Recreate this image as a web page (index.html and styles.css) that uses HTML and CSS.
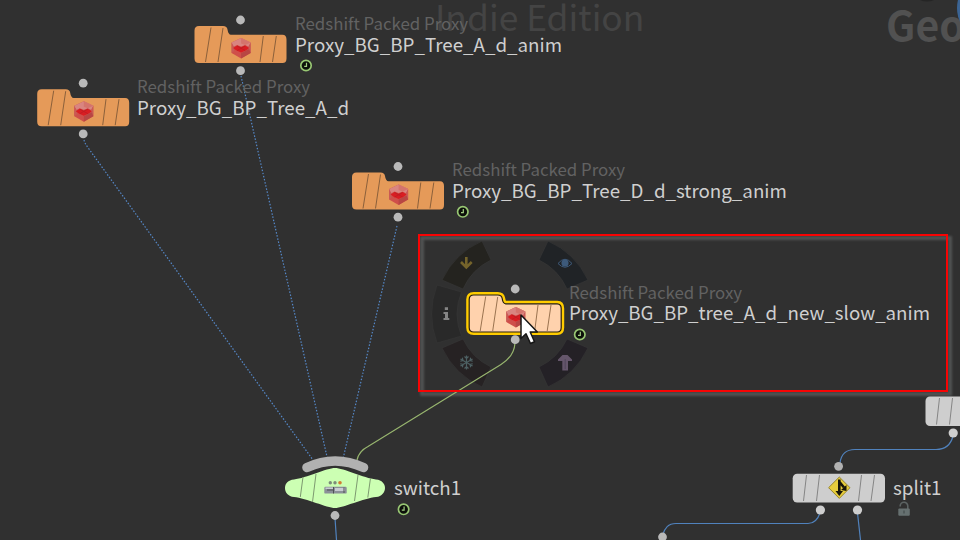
FILE: index.html
```
<!DOCTYPE html>
<html lang="en">
<head>
<meta charset="utf-8">
<title>Network editor</title>
<link rel="stylesheet" href="styles.css">
</head>
<body>
<main class="canvas">
  <svg class="defs" width="0" height="0">
    <defs>
      <path id="file-body" d="M-41.5 6H-17.5Q-13.5 6 -13 9.500Q-12.300 14.600 -9.500 14.800H42Q46 15 46 19.500V38.500Q46 43 42 43H-41.500Q-46 43 -46 38.500V10.500Q-46 6 -41.500 6Z"/>
      <path id="file-lines" d="M-29.500 7.500L-35 42M-17.500 8L-22.500 42M22.800 16L19.500 42M35.800 16L32 42"/>
      <g id="cube">
        <path fill="#cf4f4a" d="M0 -10L9.500 -5.500V5L0 10.500L-9.500 5V-5.500Z"/>
        <path fill="#d98580" d="M0 -10L9.500 -5.500L8 -1L4 -3L0 -1.500L-4 -3L-8 -1L-9.500 -5.500Z"/>
        <path fill="#d4746c" d="M0 -10L9.500 -5.500L4 -3L0 -4.500Z"/>
        <path fill="#c95a55" d="M-9.500 -5.500L-7 -1V3L-9.500 5ZM9.500 -5.500L7 -1V3L9.500 5Z"/>
        <path fill="#b84643" d="M0 5L8 1L9.500 5L0 10.500Z"/>
        <path fill="#d91d22" d="M-8 0L-4 -2.500L0 -.8L4 -2.500L8 0L5 2.200L0 4.500L-5 2.200Z"/>
        <path fill="none" stroke="#b91c22" stroke-width=".7" d="M-4 -2L4 2.500M4 -2L-4 2.500"/>
      </g>
      <g id="clock">
        <circle r="5.200" fill="#0c100a" stroke="#98c773" stroke-width="1.700"/>
        <path fill="none" stroke="#a3cf82" stroke-width="1.200" d="M.5 -2.800V.8H-1.800"/>
      </g>
      <g id="proxy">
        <use href="#file-body" fill="#e59a59"/>
        <use href="#file-lines" stroke="#8b603b" stroke-width="1"/>
        <circle r="4.400" fill="#b9b9b9"/>
        <circle cy="50.700" r="4.400" fill="#b9b9b9"/>
        <use href="#cube" x=".6" y="28"/>
      </g>
    </defs>
  </svg>

  <div class="mark edition">Indie Edition</div>
  <div class="mark context">Geo</div>

  <svg class="layer" viewBox="0 0 960 540">
    <ellipse cx="971" cy="8" rx="14" ry="22" fill="#3b6494"/>
    <path d="M920 0Q927 3 934 0Z" fill="#252525"/>
    <g class="radial">
      <path fill="#24231f" d="M442 280A80.500 80.500 0 0 1 482 241L491 260A58.500 58.500 0 0 0 463 289Z"/>
      <path fill="#202326" d="M588 280A80.500 80.500 0 0 0 548 241L539 260A58.500 58.500 0 0 1 567 289Z"/>
      <path fill="#292929" d="M437 285A83 83 0 0 0 437 343L461.500 336A58 58 0 0 1 461.500 292Z"/>
      <path fill="#262223" d="M442 348A80.500 80.500 0 0 0 482 387L491 367A58.500 58.500 0 0 1 463 339Z"/>
      <path fill="#242126" d="M588 348A80.500 80.500 0 0 1 548 387L539 367A58.500 58.500 0 0 0 567 339Z"/>
    </g>
    <path fill="none" stroke="#75642b" stroke-width="2.600" d="M466.300 257V267M461 262L466.300 267.500L471.700 262"/>
    <path fill="none" stroke="#3d5a7b" stroke-width="1" d="M558 263.500Q565 255 572 263.500Q565 271 558 263.500Z"/>
    <circle cx="565" cy="263" r="3.600" fill="#3d5a7b"/>
    <path fill="#858585" d="M444.800 307.300H448V310H444.800ZM443.500 312H448V318H449.300V320H443.500V318H445V314H443.500Z"/>
    <g fill="none" stroke="#4d6063" stroke-width="1.200" transform="translate(466.500 362.500)">
      <path id="flake" d="M0 -7V7M-2 -6L0 -4L2 -6M-2 6L0 4L2 6"/>
      <use href="#flake" transform="rotate(60)"/>
      <use href="#flake" transform="rotate(120)"/>
    </g>
    <path fill="#65566b" d="M558 359.500L562.500 355H567.500L572 359.500V361H568V370.500H562.300V361H558Z"/>
    <path stroke="#51465a" d="M565.200 359V369"/>
  </svg>

  <div class="frame-shadow"></div>

  <svg class="layer" viewBox="0 0 960 540">
    <g fill="none" stroke-width="1.200">
      <g stroke="#5588c8" stroke-dasharray="1.500 1.700">
        <path d="M84 140Q85 144 89 149L313 460"/>
        <path d="M241 76L327.500 459"/>
        <path d="M397 226L343 459"/>
      </g>
      <path stroke="#98b66f" d="M515 343C514.500 351 510 359 501 364.500L368 446.500Q359 451 357 460"/>
      <g stroke="#5082bd">
        <path d="M953 436C951 444 946 449.500 936 449.500H855C845 449.500 841 455 840 463"/>
        <path d="M820 513C818 519 815 523.500 808 523.500H676C668 523.500 665 528 662.500 535"/>
        <path d="M857.500 513L860.500 540M335 518L336.500 540"/>
      </g>
    </g>

    <use href="#proxy" x="240.500" y="20"/>
    <use href="#proxy" x="83.200" y="83.200"/>
    <use href="#proxy" x="398" y="166.500"/>

    <g transform="translate(515.200 289)">
      <use href="#file-body" fill="#ffd2ad" stroke="#ffcc00" stroke-width="6"/>
      <use href="#file-body" fill="#ffd2ad" stroke="#241c10" stroke-width="1.200"/>
      <use href="#file-lines" stroke="#9b7350"/>
      <circle r="4.400" fill="#b9b9b9"/>
      <circle cy="50.700" r="4.400" fill="#b9b9b9"/>
      <use href="#cube" x=".6" y="28"/>
    </g>

    <use href="#clock" x="306" y="65.500"/>
    <use href="#clock" x="462.800" y="211.800"/>
    <use href="#clock" x="579.800" y="334.500"/>
    <use href="#clock" x="403.600" y="509.300"/>

    <path fill="none" stroke="#b1b1b1" stroke-width="9.600" stroke-linecap="round" d="M307 467.500Q335 454.500 363.500 467.500"/>
    <path fill="#ccffb3" d="M294 479.500C306 478 327 468 335 468S364 478 376 479.500C382 480 385 484 385 488S382 496.500 376 497C364 498 343 508 335 508S306 498 294 497C288 496.500 285 492.500 285 488S288 480 294 479.500Z"/>
    <path stroke="#7d9970" d="M303 477L300.300 497M316 474L312.500 502M358 475L354.500 501M370.500 478L367.800 497.500"/>
    <g>
      <circle cx="330.300" cy="482.800" r="1.700" fill="#7b8b7a"/>
      <circle cx="335" cy="482.800" r="1.700" fill="#7b8b7a"/>
      <circle cx="340" cy="482.800" r="1.800" fill="#d17c32"/>
      <rect x="324.300" y="486.800" width="22.400" height="6.800" rx="1.200" fill="#8b9098"/>
      <path fill="#c8ccd1" d="M325.500 487.500H333V489H325.500ZM335 488H345V491H335Z"/>
      <path stroke="#4e5155" d="M327 490H333M333.500 487V493.500M344 487.500V493"/>
    </g>
    <circle cx="335" cy="515.500" r="4.400" fill="#b9b9b9"/>

    <g fill="#cecece">
      <rect x="925.500" y="396.500" width="60" height="29.500" rx="4.500"/>
      <rect x="792.700" y="473.700" width="92.300" height="28.800" rx="4.500"/>
      <circle cx="953.200" cy="433" r="4.600"/>
      <circle cx="820.400" cy="510" r="4.600"/>
      <circle cx="857.500" cy="510" r="4.600"/>
    </g>
    <circle cx="838.600" cy="466.300" r="4.400" fill="#b1b1b1"/>
    <circle cx="662.500" cy="537" r="4.400" fill="#b9b9b9"/>
    <path stroke="#858585" d="M939.500 398L936.500 424.500M952.500 398L949.500 424.500M806.500 475L803.500 501M819.500 475L816.500 501M861.500 475L858.500 501M874.500 475L871 501"/>
    <path fill="#e6cc3c" stroke="#98862e" stroke-linejoin="round" d="M839.300 477L850 487.700L839.300 498.400L828.600 487.700Z"/>
    <path fill="none" stroke="#161409" stroke-width="2.600" d="M839.300 493V479.500M839.500 482L844 487.500"/>
    <path fill="#161409" d="M835.500 491H843L839.300 496ZM841 490L846.500 485V491Z"/>
    <path fill="none" stroke="#5c6363" stroke-width="1.600" d="M900.200 506.500V506A3.800 3.800 0 0 1 907.800 506V509"/>
    <rect x="898.300" y="508.500" width="11.500" height="7.200" rx="1" fill="#667070"/>
    <path stroke="#3d4444" d="M904 510.500V513.500"/>
  </svg>

  <div class="label anim-a"><span class="kind">Redshift Packed Proxy</span><span class="name">Proxy_BG_BP_Tree_A_d_anim</span></div>
  <div class="label still-a"><span class="kind">Redshift Packed Proxy</span><span class="name">Proxy_BG_BP_Tree_A_d</span></div>
  <div class="label strong-d"><span class="kind">Redshift Packed Proxy</span><span class="name">Proxy_BG_BP_Tree_D_d_strong_anim</span></div>
  <div class="label slow-a"><span class="kind">Redshift Packed Proxy</span><span class="name">Proxy_BG_BP_tree_A_d_new_slow_anim</span></div>
  <div class="label switch"><span class="name">switch1</span></div>
  <div class="label split"><span class="name">split1</span></div>

  <svg class="layer" viewBox="0 0 960 540">
    <path fill="#fff" stroke="#151515" stroke-width="1.500" stroke-linejoin="round" d="M521 315V338.500L526 333.700L530.500 343.500L534.500 341.700L530.200 332H537.300Z"/>
  </svg>
  <div class="frame"></div>
</main>
</body>
</html>
```
FILE: styles.css
```
* {
  box-sizing: border-box;
}

body {
  margin: 0;
  background: #303030;
}

.canvas {
  position: relative;
  width: 960px;
  height: 540px;
  overflow: hidden;
  background: #303030;
  font-family: "Noto Sans CJK SC", "Noto Sans", sans-serif;
}

.defs,
.layer {
  position: absolute;
  top: 0;
  left: 0;
}

.layer {
  width: 960px;
  height: 540px;
}

.radial path {
  stroke: #383838;
  stroke-width: 0.6;
}

.mark {
  position: absolute;
  white-space: nowrap;
}

.edition {
  left: 435px;
  top: -5px;
  color: #444;
  font-size: 35.400px;
  line-height: 42px;
}

.context {
  left: 886px;
  top: -2px;
  color: #515151;
  font-size: 41px;
  font-weight: 700;
  line-height: 50px;
}

.label {
  position: absolute;
  display: flex;
  flex-direction: column;
  white-space: nowrap;
}

.kind {
  height: 20px;
  color: #626262;
  font-size: 16.850px;
  line-height: 20px;
}

.name {
  color: #cfcfcf;
  font-size: 18.750px;
  line-height: 22px;
}

.anim-a {
  left: 295px;
  top: 13px;
}

.still-a {
  left: 137px;
  top: 76px;
}

.strong-d {
  left: 452px;
  top: 159px;
}

.slow-a {
  left: 569px;
  top: 282px;
}

.slow-a .name {
  font-size: 18.700px;
  line-height: 20px;
}

.switch {
  left: 394px;
  top: 476px;
}

.split {
  left: 893px;
  top: 476px;
}

.frame {
  position: absolute;
  left: 418px;
  top: 234px;
  width: 530px;
  height: 158px;
  border: 2px solid #f80404;
}

.frame-shadow {
  position: absolute;
  left: 420px;
  top: 236px;
  width: 532px;
  height: 160px;
  border: 4px solid #505252;
  filter: blur(1px);
}
```
